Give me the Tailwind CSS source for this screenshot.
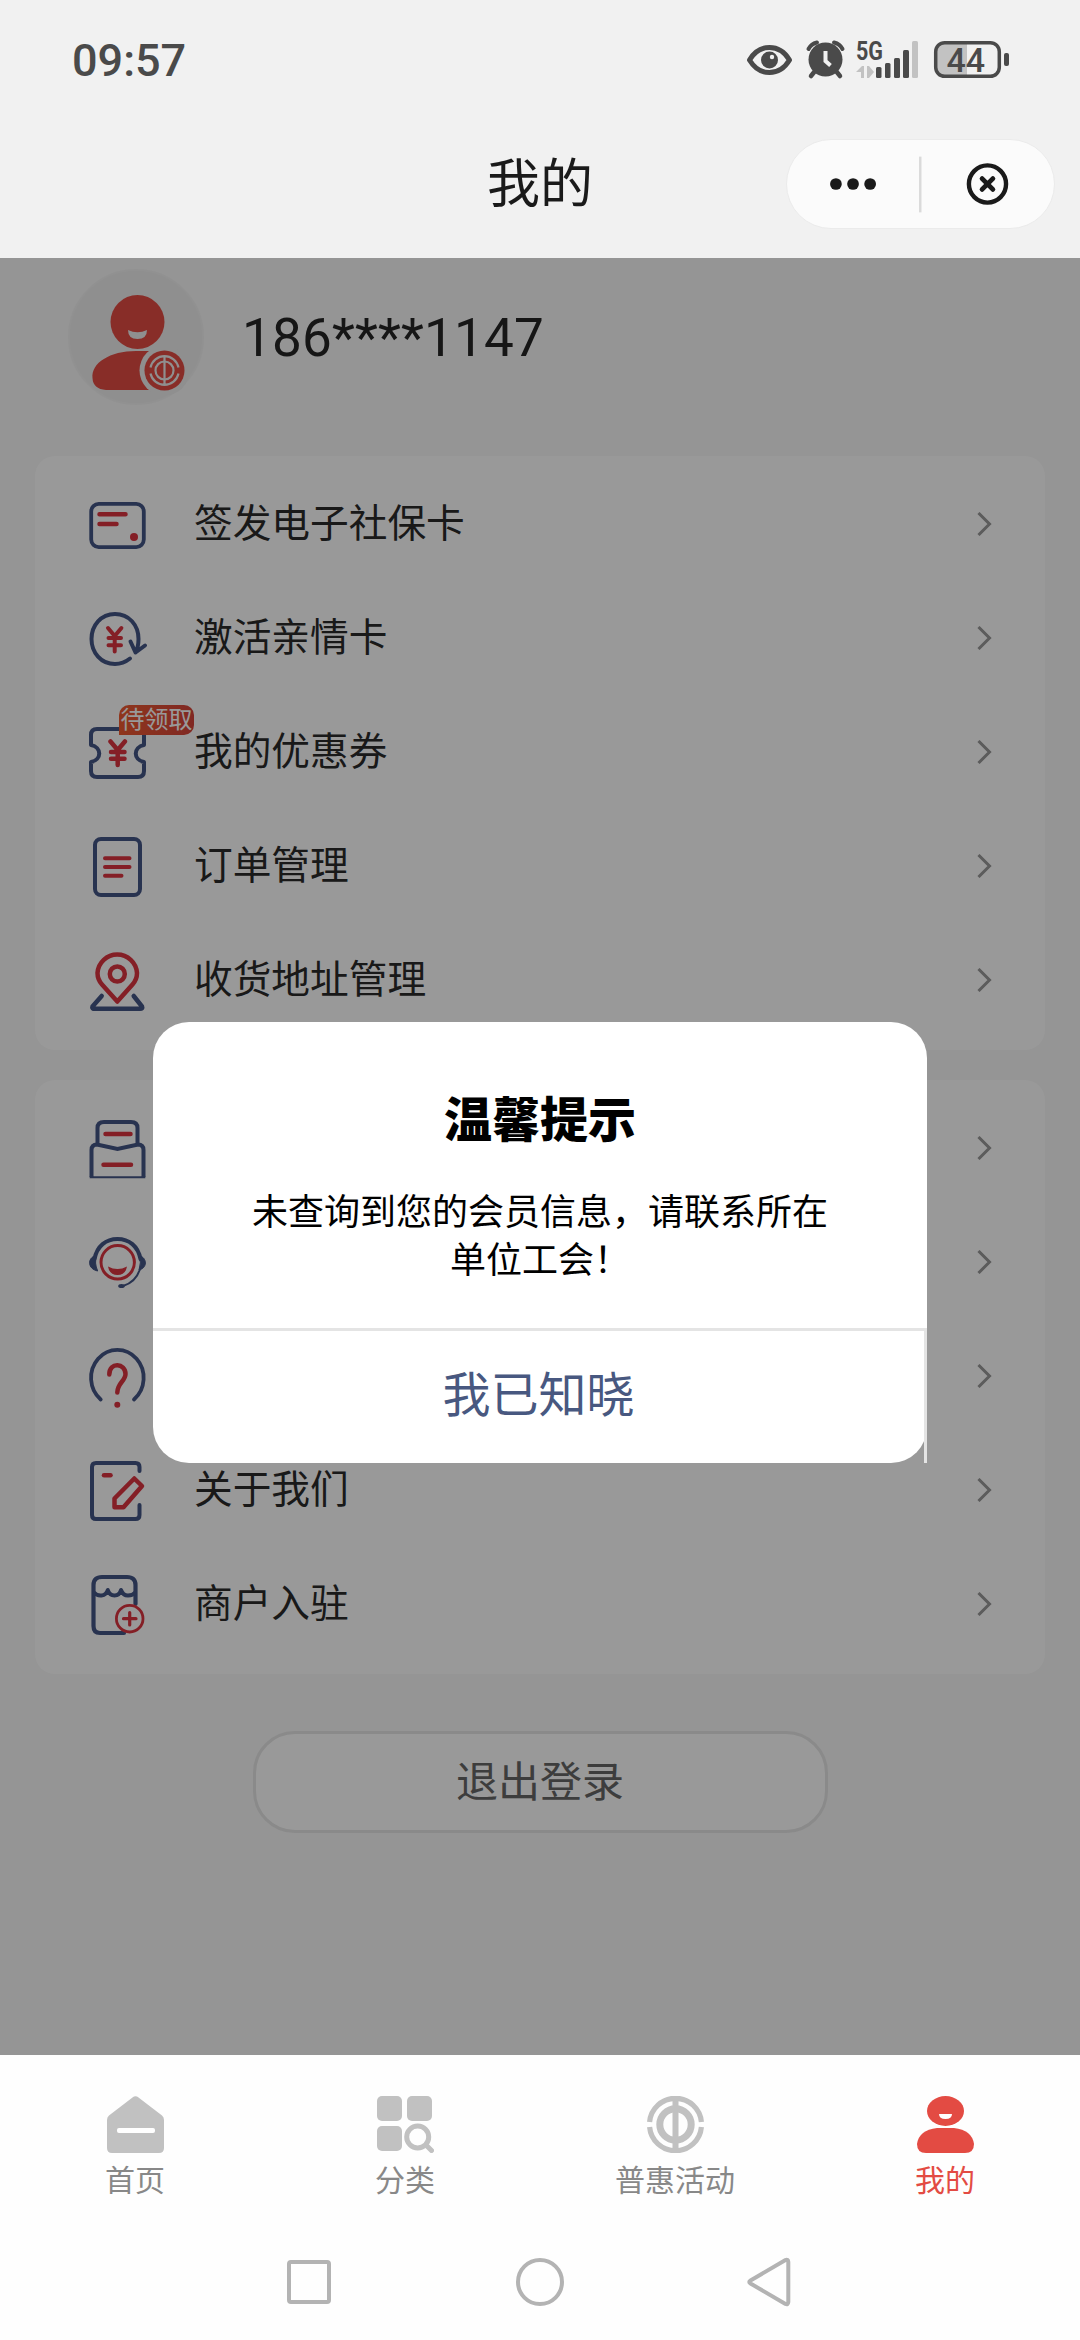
<!DOCTYPE html>
<html lang="zh-CN">
<head>
<meta charset="utf-8">
<title>我的</title>
<script src="https://cdn.jsdelivr.net/npm/@tailwindcss/browser@4"></script>
</head>
<body class="font-['Roboto','Noto_Sans_CJK_SC',sans-serif]">
<div class="relative flex h-[2340px] w-[1080px] flex-col overflow-hidden bg-[#fefefe]">

  <header class="flex h-[258px] shrink-0 flex-col bg-[#f1f1f1] pb-6">
    <div class="flex h-[120px] shrink-0 items-center justify-between pl-[72px] pr-[70px]">
      <span class="text-[45px] font-medium leading-none text-[#4a4a4a]">09:57</span>
      <svg class="h-[64px] w-[264px]" viewBox="746 28 264 64" fill="none">
        <path d="M749.500 60Q757 47.500 769.500 47.500T789.500 60Q782 72.500 769.500 72.500T749.500 60Z" stroke="#4a4a4a" stroke-width="5" stroke-linejoin="round"/>
        <circle cx="769.500" cy="60" r="8.500" fill="#4a4a4a"/><circle cx="772" cy="57" r="2.200" fill="#f1f1f1"/>
        <circle cx="825.500" cy="59.500" r="17" fill="#4a4a4a"/>
        <path d="M808.500 49Q811 44 817 42.500M842.500 49Q840 44 834 42.500" stroke="#4a4a4a" stroke-width="4" stroke-linecap="round"/>
        <path d="M815 71l-4 5M836 71l4 5" stroke="#4a4a4a" stroke-width="4.500" stroke-linecap="round"/>
        <path d="M825.500 51v10l5 4.500" stroke="#f1f1f1" stroke-width="4"/>
        <text x="856" y="59.500" font-size="26" font-weight="700" textLength="27" lengthAdjust="spacingAndGlyphs" fill="#4a4a4a">5G</text>
        <path d="M856 72l6-6h2v12h-3v-6zM867 66h2l5 6-5 6h-2z" fill="#c2c2c2"/>
        <g fill="#4a4a4a"><rect x="876" y="67" width="5.500" height="11" rx="1.500"/><rect x="885" y="63" width="5.500" height="15" rx="1.500"/><rect x="894" y="58" width="6" height="20" rx="1.500"/><rect x="903" y="50" width="6" height="28" rx="1.500"/></g>
        <rect x="912" y="41" width="6" height="37" rx="1.500" fill="#c2c2c2"/>
        <path d="M944 43h23v33h-23q-8-1-8-8V51q0-7 8-8z" fill="#c2c2c2"/>
        <rect x="935.700" y="42.700" width="63.600" height="33.600" rx="9" stroke="#4a4a4a" stroke-width="3.500"/>
        <rect x="1004" y="53" width="5" height="13" rx="2" fill="#4a4a4a"/>
        <text x="946.500" y="71.500" font-size="34" font-weight="500" textLength="38.500" fill="#4a4a4a">44</text>
      </svg>
    </div>
    <div class="grid grow grid-cols-[1fr_auto_1fr] items-center pr-[25px]">
      <span></span>
      <h1 class="pl-[25px] pt-4 text-[53px] leading-[80px] text-[#1a1a1a]">我的</h1>
      <div class="mt-[13px] flex h-[90px] w-[269px] items-center justify-self-end rounded-full border border-[#ebebeb] bg-[#fbfbfb]">
        <svg class="h-full w-full" viewBox="0 0 269 90">
          <g fill="#1a1a1a"><circle cx="48" cy="45" r="6"/><circle cx="65.500" cy="45" r="6"/><circle cx="83" cy="45" r="6"/></g>
          <rect x="133" y="17" width="2.500" height="57" fill="#dadada"/>
          <g fill="none" stroke="#1a1a1a" stroke-linecap="round"><circle cx="203" cy="45" r="19" stroke-width="4.500"/><path d="M197.500 39.500l11 11M208.500 39.500l-11 11" stroke-width="5"/></g>
        </svg>
      </div>
    </div>
  </header>

  <main class="relative flex h-[1797px] shrink-0 flex-col bg-[#f8f8f8] px-[35px] pt-[11px]">
    <section class="flex items-center pl-[33px]">
      <svg class="h-[136px] w-[136px]" viewBox="0 0 136 136">
        <circle cx="68" cy="68" r="67" fill="#eeeeee" stroke="#f2f2f2" stroke-width="2"/>
        <ellipse cx="69.500" cy="53" rx="27" ry="27" fill="#e34b43"/>
        <path d="M60 61q9.500 4.500 19 0q0 9-9.500 9T60 61z" fill="#eee"/>
        <path d="M24.500 109C23 94 42 82 68 82h24v39H38Q25 120 24.500 109z" fill="#e34b43"/>
        <circle cx="96.500" cy="101.500" r="25" fill="#eee"/><circle cx="96.500" cy="101.500" r="20" fill="#e34b43"/>
        <g fill="none" stroke="#eee" stroke-width="2.200"><circle cx="96.500" cy="101.500" r="9"/><path d="M96.500 87v29M82.500 98.500a14.300 14.300 0 0 1 28 0M82.500 104.500a14.300 14.300 0 0 0 28 0"/></g>
      </svg>
      <span class="pl-[38px] pt-[2px] text-[53px] leading-none tracking-[0.2px] text-[#262626]">186****1147</span>
    </section>

    <section class="mt-[51px] flex h-[594px] flex-col rounded-[20px] bg-white py-3 pl-[52px] pr-[53px] text-[38.7px] text-[#2b2b2b]">
      <div class="flex h-[114px] items-center">
        <svg class="h-16 w-[62px]" viewBox="0 0 62 64" fill="none" stroke-linecap="round">
          <rect x="4.200" y="10.900" width="52.600" height="43.200" rx="7.500" stroke="#445585" stroke-width="3.800"/>
          <path d="M12.500 21.300h26M12.500 31h17" stroke="#dd3440" stroke-width="4.500"/><circle cx="47" cy="44" r="4" fill="#dd3440"/>
        </svg>
        <span class="grow pl-[45px] pb-[1px]">签发电子社保卡</span>
        <svg class="mb-[2px] h-6 w-[15px]" viewBox="0 0 15 24" fill="none" stroke="#999" stroke-width="3"><path d="M1.500 1l11 11-11 11"/></svg>
      </div>
      <div class="flex h-[114px] items-center">
        <svg class="h-16 w-[62px]" viewBox="0 0 62 64" fill="none" stroke-linecap="round" stroke-linejoin="round" stroke-width="4">
          <path d="M43 51.500C38 55.500 33 57 28 57C14 57 4.500 45.500 4.500 32S14 7 28 7S51.500 18 51.500 32Q51.500 40 48.500 45.500M43.500 34.500l5 11 9.500-7" stroke="#445585"/>
          <path d="M21 21l6.700 8 6.700-8M27.700 29v15.500M21.500 31h12.500M21.500 38.300h12.500" stroke="#dd3440"/>
        </svg>
        <span class="grow pl-[45px] pb-[1px]">激活亲情卡</span>
        <svg class="mb-[2px] h-6 w-[15px]" viewBox="0 0 15 24" fill="none" stroke="#999" stroke-width="3"><path d="M1.500 1l11 11-11 11"/></svg>
      </div>
      <div class="relative flex h-[114px] items-center">
        <svg class="h-16 w-[62px]" viewBox="0 0 62 64" fill="none" stroke-linecap="round" stroke-linejoin="round" stroke-width="4">
          <path d="M10 8H51Q57 8 57 14V24C46 26 46 39 57 41V50Q57 56 51 56H10Q4 56 4 50V41C15 39 15 26 4 24V14Q4 8 10 8Z" stroke="#445585"/>
          <path d="M23.500 20.500l7.200 8.500 7.200-8.500M30.700 29v15M24 31h13.500M24 37.700h13.500" stroke="#dd3440" stroke-width="4.500"/>
        </svg>
        <span class="absolute left-[32px] top-[9px] flex h-[30px] w-[75px] items-center justify-center rounded-[10px] rounded-bl-none bg-linear-to-r from-[#ee5a30] to-[#d6443a] text-[24px] leading-none text-white">待领取</span>
        <span class="grow pl-[45px] pb-[1px]">我的优惠券</span>
        <svg class="mb-[2px] h-6 w-[15px]" viewBox="0 0 15 24" fill="none" stroke="#999" stroke-width="3"><path d="M1.500 1l11 11-11 11"/></svg>
      </div>
      <div class="flex h-[114px] items-center">
        <svg class="h-16 w-[62px]" viewBox="0 0 62 64" fill="none" stroke-linecap="round" stroke-width="4">
          <rect x="8" y="4" width="45" height="56" rx="6" stroke="#445585"/>
          <path d="M18 23.300h24.500M18 32h24.500M18 40.700h16.500" stroke="#dd3440"/>
        </svg>
        <span class="grow pl-[45px] pb-[1px]">订单管理</span>
        <svg class="mb-[2px] h-6 w-[15px]" viewBox="0 0 15 24" fill="none" stroke="#999" stroke-width="3"><path d="M1.500 1l11 11-11 11"/></svg>
      </div>
      <div class="flex h-[114px] items-center">
        <svg class="h-16 w-[62px]" viewBox="0 0 62 64" fill="none" stroke-linecap="round" stroke-linejoin="round">
          <path d="M14.700 47L5.500 57.500Q4.500 59.800 8 59.800H53Q56 59.800 55 57.500L46.700 47" stroke="#445585" stroke-width="4.500"/>
          <path d="M30.300 52.500L15 35.500C11 31 10.500 28 10.500 24A19.800 19.800 0 0 1 50 24C50 28 49.500 31 45.500 35.500Z" stroke="#dd3440" stroke-width="4.500"/><circle cx="30.300" cy="25" r="7.500" stroke="#dd3440" stroke-width="4.500"/>
        </svg>
        <span class="grow pl-[45px] pb-[1px]">收货地址管理</span>
        <svg class="mb-[2px] h-6 w-[15px]" viewBox="0 0 15 24" fill="none" stroke="#999" stroke-width="3"><path d="M1.500 1l11 11-11 11"/></svg>
      </div>
    </section>

    <section class="mt-[30px] flex h-[594px] flex-col rounded-[20px] bg-white py-3 pl-[52px] pr-[53px] text-[38.7px] text-[#2b2b2b]">
      <div class="flex h-[114px] items-center justify-between">
        <svg class="h-16 w-[62px]" viewBox="0 0 62 64" fill="none" stroke-linecap="round" stroke-width="4">
          <path d="M10.500 27V11Q10.500 5 17 5H44Q50.500 5 50.500 11V27" stroke="#445585"/>
          <path d="M4.500 60V33Q4.500 27.500 10 27.500L30.500 32 51 27.500Q56.500 27.500 56.500 33V60" stroke="#445585" stroke-linecap="butt"/><path d="M2.700 60.200h55.600" stroke="#445585" stroke-width="2" stroke-linecap="butt"/><path d="M3 55v6h5q-3-1-3-6zM58 55v6h-5q3-1 3-6z" fill="#445585"/>
          <path d="M18.500 17h25M16.500 47.700h27.500" stroke="#dd3440" stroke-width="4.500"/>
        </svg>
        <svg class="mb-[2px] h-6 w-[15px]" viewBox="0 0 15 24" fill="none" stroke="#999" stroke-width="3"><path d="M1.500 1l11 11-11 11"/></svg>
      </div>
      <div class="flex h-[114px] items-center justify-between">
        <svg class="h-16 w-[62px]" viewBox="0 0 62 64" fill="none" stroke-linecap="round">
          <path d="M7.500 28C10 15 19 8 30.500 8S51 15 53.500 28" stroke="#445585" stroke-width="4"/>
          <path d="M8.500 24.500C0 27 .5 38 10.700 40Q7 32 9.500 24.500zM52.500 24.500C60.500 27 60.500 37 52 39Q54.500 32 52.500 24.500z" fill="#445585" stroke="#445585"/>
          <path d="M53 38Q49 51 36 55" stroke="#445585" stroke-width="2"/><ellipse cx="34.500" cy="55" rx="3.300" ry="2" fill="#445585"/>
          <circle cx="30.700" cy="31.300" r="16.700" stroke="#dd3440" stroke-width="3"/><path d="M21 35.500q9.500 5 19 0q-1.500 8.500-9.500 8.500T21 35.500z" fill="#dd3440"/>
        </svg>
        <svg class="mb-[2px] h-6 w-[15px]" viewBox="0 0 15 24" fill="none" stroke="#999" stroke-width="3"><path d="M1.500 1l11 11-11 11"/></svg>
      </div>
      <div class="flex h-[114px] items-center justify-between">
        <svg class="h-16 w-[62px]" viewBox="0 0 62 64" fill="none" stroke-linecap="round">
          <path d="M13.700 54.500A26.300 28 0 1 1 47 54.500" stroke="#445585" stroke-width="3.800"/>
          <path d="M22.300 29.500C22.300 16.500 38.500 18 38.500 29C38.500 36 30.300 38 30.300 47.500" stroke="#dd3440" stroke-width="4.500"/><circle cx="30.300" cy="59.700" r="3" fill="#dd3440"/>
        </svg>
        <svg class="mb-[2px] h-6 w-[15px]" viewBox="0 0 15 24" fill="none" stroke="#999" stroke-width="3"><path d="M1.500 1l11 11-11 11"/></svg>
      </div>
      <div class="flex h-[114px] items-center">
        <svg class="h-16 w-[62px]" viewBox="0 0 62 64" fill="none" stroke-linecap="round" stroke-linejoin="round">
          <path d="M52.500 12V8Q52.500 4 48.500 4H9Q5 4 5 8V56Q5 60 9 60H48.500Q52.500 60 52.500 56V46" stroke="#445585" stroke-width="4"/>
          <path d="M17 16.300h6.500" stroke="#dd3440" stroke-width="4.500"/><path d="M47.300 19.500L55 27 36.500 48.200H27.500V39.500Z" stroke="#dd3440" stroke-width="4.500"/>
        </svg>
        <span class="grow pl-[45px] pb-[1px]">关于我们</span>
        <svg class="mb-[2px] h-6 w-[15px]" viewBox="0 0 15 24" fill="none" stroke="#999" stroke-width="3"><path d="M1.500 1l11 11-11 11"/></svg>
      </div>
      <div class="flex h-[114px] items-center">
        <svg class="h-16 w-[62px]" viewBox="0 0 62 64" fill="none" stroke-linecap="round">
          <path d="M48.500 31V12Q48.500 4 40 4H15Q6.500 4 6.500 12V53Q6.500 60 13 60H37" stroke="#445585" stroke-width="4.200"/>
          <path d="M7 19.500Q10 23 14.500 22.500 19.500 22 20.800 17 22.500 22.500 27.500 22.500T34 17Q36 22.500 41 22.500T48 19.500" stroke="#445585" stroke-width="4" stroke-linejoin="round"/>
          <g stroke="#dd3440"><circle cx="42.700" cy="45.700" r="13.300" stroke-width="2.800" fill="white"/><path d="M36.500 45.700h12.500M42.700 39.500V52" stroke-width="3.200"/></g>
        </svg>
        <span class="grow pl-[45px] pb-[1px]">商户入驻</span>
        <svg class="mb-[2px] h-6 w-[15px]" viewBox="0 0 15 24" fill="none" stroke="#999" stroke-width="3"><path d="M1.500 1l11 11-11 11"/></svg>
      </div>
    </section>

    <button class="mt-[57px] flex h-[102px] w-[575px] items-center justify-center self-center rounded-[42px] border-[3px] border-[#e6e6e6] bg-white pt-[1px] text-[42px] text-[#666]">退出登录</button>

    <div class="absolute inset-0 bg-black/40"></div>

    <div class="absolute left-[153px] top-[764px] flex h-[441px] w-[774px] flex-col rounded-[36px] bg-white text-center">
      <h2 class="pt-[64px] text-[48px] font-black leading-[70px] text-black">温馨提示</h2>
      <p class="mx-auto w-[576px] pt-[33px] text-[36px] leading-[48px] text-black">未查询到您的会员信息，请联系所在单位工会！</p>
      <div class="mt-auto flex h-[135px] items-center justify-center border-r-[3px] border-t-[3px] border-[#e4e4e4] pb-[2px] text-[48px] text-[#485880]">我已知晓</div>
    </div>
  </main>

  <nav class="grid grid-cols-4 pt-[41px] text-[30px] leading-[44px] text-[#888]">
    <div class="flex flex-col items-center gap-1.5">
      <svg class="size-[57px]" viewBox="0 0 57 57" fill="#c1c1c1"><path d="M25.500 1.500Q28.500-1 31.500 1.500L55 19.500Q57 21 57 24V52Q57 57 52 57H5Q0 57 0 52V24Q0 21 2 19.500Z"/><rect x="10" y="32" width="38" height="5" rx="2" fill="#fff"/></svg>
      <span>首页</span>
    </div>
    <div class="flex flex-col items-center gap-1.5">
      <svg class="size-[57px]" viewBox="0 0 57 57" fill="#c1c1c1"><rect width="25" height="25" rx="5"/><rect x="30" width="25" height="25" rx="5"/><rect y="30" width="25" height="25" rx="5"/><g fill="none" stroke="#c1c1c1"><circle cx="40.700" cy="41" r="11" stroke-width="5"/><path d="M50 50l4.500 4.500" stroke-width="5" stroke-linecap="round"/></g></svg>
      <span>分类</span>
    </div>
    <div class="flex flex-col items-center gap-1.5">
      <svg class="size-[57px]" viewBox="0 0 57 57" fill="none" stroke="#c1c1c1"><path d="M2.600 26A26 26 0 0 1 54.400 26M2.600 31A26 26 0 0 0 54.400 31" stroke-width="5.200"/><circle cx="28.500" cy="28.500" r="15.700" stroke-width="7"/><path d="M28.500 3v51" stroke-width="6"/></svg>
      <span>普惠活动</span>
    </div>
    <div class="flex flex-col items-center gap-1.5 text-[#e34b43]">
      <svg class="size-[57px]" viewBox="0 0 57 57" fill="#e34b43"><ellipse cx="28.500" cy="15" rx="18.500" ry="15"/><path d="M22 18h13q0 5-6.500 5T22 18z" fill="#fff"/><path d="M20 32H37Q55 34 57 48 57 57 48 57H9Q0 57 0 48 2 34 20 32Z"/></svg>
      <span>我的</span>
    </div>
  </nav>

  <div class="mt-[54px] flex items-center justify-center gap-[181px]">
    <svg class="h-[50px] w-[50px]" viewBox="0 0 50 50" fill="none" stroke="#b3b3b3" stroke-width="4"><rect x="5" y="5" width="40" height="40" rx="2"/></svg>
    <svg class="h-[50px] w-[50px]" viewBox="0 0 50 50" fill="none" stroke="#b3b3b3" stroke-width="4"><circle cx="25" cy="25" r="22"/></svg>
    <svg class="h-[50px] w-[50px]" viewBox="0 0 50 50" fill="none" stroke="#b3b3b3" stroke-width="4" stroke-linejoin="round"><path d="M39.500 3Q42 2 42.300 5V45Q42 48 39.500 47L4.500 26.500Q2 25 4.500 23.500Z"/></svg>
  </div>
</div>
</body>
</html>
